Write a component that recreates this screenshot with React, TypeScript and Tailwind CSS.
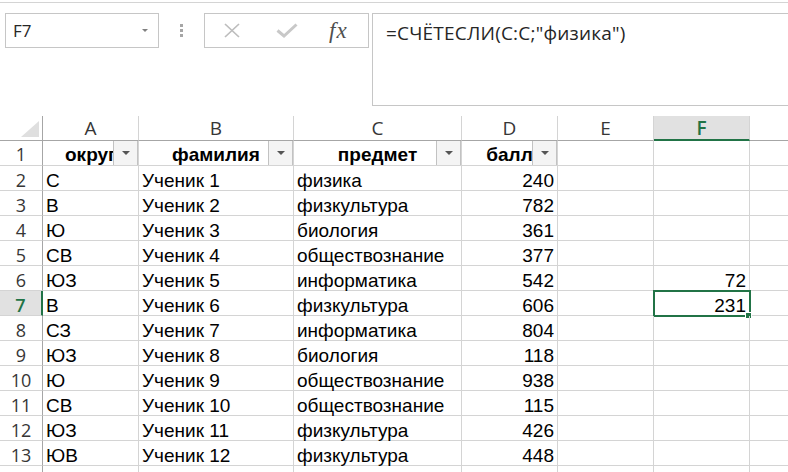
import React from "react";

const GREEN = "#217346";

type Row = { a: string; b: string; c: string; d: string; f?: string };

const rows: Row[] = [
  { a: "С", b: "Ученик 1", c: "физика", d: "240" },
  { a: "В", b: "Ученик 2", c: "физкультура", d: "782" },
  { a: "Ю", b: "Ученик 3", c: "биология", d: "361" },
  { a: "СВ", b: "Ученик 4", c: "обществознание", d: "377" },
  { a: "ЮЗ", b: "Ученик 5", c: "информатика", d: "542", f: "72" },
  { a: "В", b: "Ученик 6", c: "физкультура", d: "606", f: "231" },
  { a: "СЗ", b: "Ученик 7", c: "информатика", d: "804" },
  { a: "ЮЗ", b: "Ученик 8", c: "биология", d: "118" },
  { a: "Ю", b: "Ученик 9", c: "обществознание", d: "938" },
  { a: "СВ", b: "Ученик 10", c: "обществознание", d: "115" },
  { a: "ЮЗ", b: "Ученик 11", c: "физкультура", d: "426" },
  { a: "ЮВ", b: "Ученик 12", c: "физкультура", d: "448" },
];

const headers = ["округ", "фамилия", "предмет", "балл"];

function FilterButton() {
  return (
    <div className="absolute right-0 -top-[1px] w-[25px] h-[26px] border border-[#c2c2c2] bg-[#f4f4f4] flex items-center justify-center">
      <div className="w-0 h-0 border-l-[4px] border-r-[4px] border-t-[4px] border-l-transparent border-r-transparent border-t-[#555]" />
    </div>
  );
}

const cell = "relative h-[25px] border-r border-b border-[#d4d4d4] whitespace-nowrap";
const txt = "font-['Liberation_Sans',Arial,sans-serif] text-[19px] leading-[25px] text-black";
const hdr = "font-['Open_Sans',sans-serif] text-[#363636]";

export default function App() {
  return (
    <div className="w-[788px] h-[472px] overflow-hidden bg-white pt-[2px]">
      {/* Formula bar */}
      <div className="h-[114px] border-t border-[#d4d4d4] flex items-start pl-[5px] pt-[10px]">
        <div className="w-[154px] h-[35px] shrink-0 border border-[#c6c6c6] flex items-center justify-between pl-[7px] pr-[10px]">
          <span className="font-['Open_Sans',sans-serif] text-[17px] text-[#262626]">F7</span>
          <div className="w-0 h-0 border-l-[3px] border-r-[3px] border-t-[3px] border-l-transparent border-r-transparent border-t-[#808080]" />
        </div>
        <div className="ml-[21px] mt-[11px] flex flex-col gap-[2px]">
          <div className="w-[3px] h-[3px] bg-[#a6a6a6]" />
          <div className="w-[3px] h-[3px] bg-[#a6a6a6]" />
          <div className="w-[3px] h-[3px] bg-[#a6a6a6]" />
        </div>
        <div className="ml-[21px] w-[165px] h-[35px] shrink-0 border border-[#c6c6c6] flex items-center pl-[18px]">
          <svg width="18" height="15" viewBox="0 0 18 15">
            <path d="M2 1 L16 14 M16 1 L2 14" stroke="#bdbdbd" strokeWidth="1.7" fill="none" />
          </svg>
          <svg className="ml-[35px]" width="22" height="15" viewBox="0 0 22 15">
            <path d="M1.5 7.5 L8 13 L20.5 1.5" stroke="#c8c8c8" strokeWidth="3" fill="none" />
          </svg>
          <span className="ml-[31px] font-['Liberation_Serif',serif] italic text-[23px] leading-none text-[#4f4f4f] tracking-[1px]">
            fx
          </span>
        </div>
        <div className="ml-[3px] w-[430px] h-[93px] shrink-0 border border-[#c6c6c6] pl-[13px] pt-[8px]">
          <span className="font-['Open_Sans',sans-serif] text-[19px] leading-[23px] text-[#262626] tracking-[0.2px]">
            =СЧЁТЕСЛИ(С:С;"физика")
          </span>
        </div>
      </div>

      {/* Grid */}
      <div className="grid grid-cols-[43px_96px_155px_168px_96px_96px_96px_38px]">
        {/* Column headers */}
        <div className="h-[25px] border-r border-b border-r-[#a6a6a6] border-b-[#a6a6a6] flex items-end justify-end pr-[3px] pb-[3px]">
          <svg width="18" height="16" viewBox="0 0 18 16">
            <polygon points="18,0 18,16 0,16" fill="#dfdfdf" />
          </svg>
        </div>
        {["A", "B", "C", "D", "E"].map((l) => (
          <div
            key={l}
            className={`h-[25px] border-r border-b border-r-[#d4d4d4] border-b-[#a6a6a6] text-center text-[19px] leading-[24px] ${hdr}`}
          >
            {l}
          </div>
        ))}
        <div className="h-[25px] bg-[#e1e1e1] border-r border-r-[#d4d4d4] border-b-2 border-b-[#217346] text-center text-[19px] leading-[24px] font-semibold font-['Open_Sans',sans-serif] text-[#217346]">
          F
        </div>
        <div className="h-[25px] border-b border-b-[#a6a6a6]" />

        {/* Row 1: table headers */}
        <div className={`h-[25px] border-r border-b border-r-[#a6a6a6] border-b-[#d4d4d4] text-center text-[18px] leading-[25px] pt-[1px] ${hdr}`}>
          1
        </div>
        {headers.map((h) => (
          <div key={h} className={`${cell} overflow-hidden text-center font-bold pt-[1px] ${txt}`}>
            {h}
            <FilterButton />
          </div>
        ))}
        <div className={cell} />
        <div className={cell} />
        <div className="h-[25px] border-b border-[#d4d4d4]" />

        {rows.map((r, i) => {
          const n = i + 2;
          const sel = n === 7;
          return (
            <React.Fragment key={n}>
              <div
                className={
                  sel
                    ? "h-[25px] bg-[#e1e1e1] border-r-2 border-b border-r-[#217346] border-b-[#d4d4d4] text-center text-[18px] leading-[25px] pt-[2px] font-semibold font-['Open_Sans',sans-serif] text-[#217346]"
                    : `h-[25px] border-r border-b border-r-[#a6a6a6] border-b-[#d4d4d4] text-center text-[18px] leading-[25px] pt-[2px] ${hdr}`
                }
              >
                {n}
              </div>
              <div className={`${cell} pl-[3px] pt-[2px] ${txt}`}>{r.a}</div>
              <div className={`${cell} pl-[3px] pt-[2px] ${txt}`}>{r.b}</div>
              <div className={`${cell} pl-[3px] pt-[2px] ${txt}`}>{r.c}</div>
              <div className={`${cell} pr-[3px] pt-[2px] text-right ${txt}`}>{r.d}</div>
              <div className={cell} />
              <div className={`${cell} pr-[3px] pt-[2px] text-right ${txt}`}>
                {r.f}
                {sel && (
                  <>
                    <div className="absolute -left-[1px] -top-[1px] w-[98px] h-[27px] border-2" style={{ borderColor: GREEN }} />
                    <div className="absolute left-[91px] top-[21px] w-[7px] h-[7px] bg-[#217346] border border-white" />
                  </>
                )}
              </div>
              <div className="h-[25px] border-b border-[#d4d4d4]" />
            </React.Fragment>
          );
        })}

        {/* partial row 14 */}
        <div className="h-[25px] border-r border-r-[#a6a6a6]" />
        <div className="h-[25px] border-r border-[#d4d4d4]" />
        <div className="h-[25px] border-r border-[#d4d4d4]" />
        <div className="h-[25px] border-r border-[#d4d4d4]" />
        <div className="h-[25px] border-r border-[#d4d4d4]" />
        <div className="h-[25px] border-r border-[#d4d4d4]" />
        <div className="h-[25px] border-r border-[#d4d4d4]" />
        <div className="h-[25px]" />
      </div>
    </div>
  );
}
